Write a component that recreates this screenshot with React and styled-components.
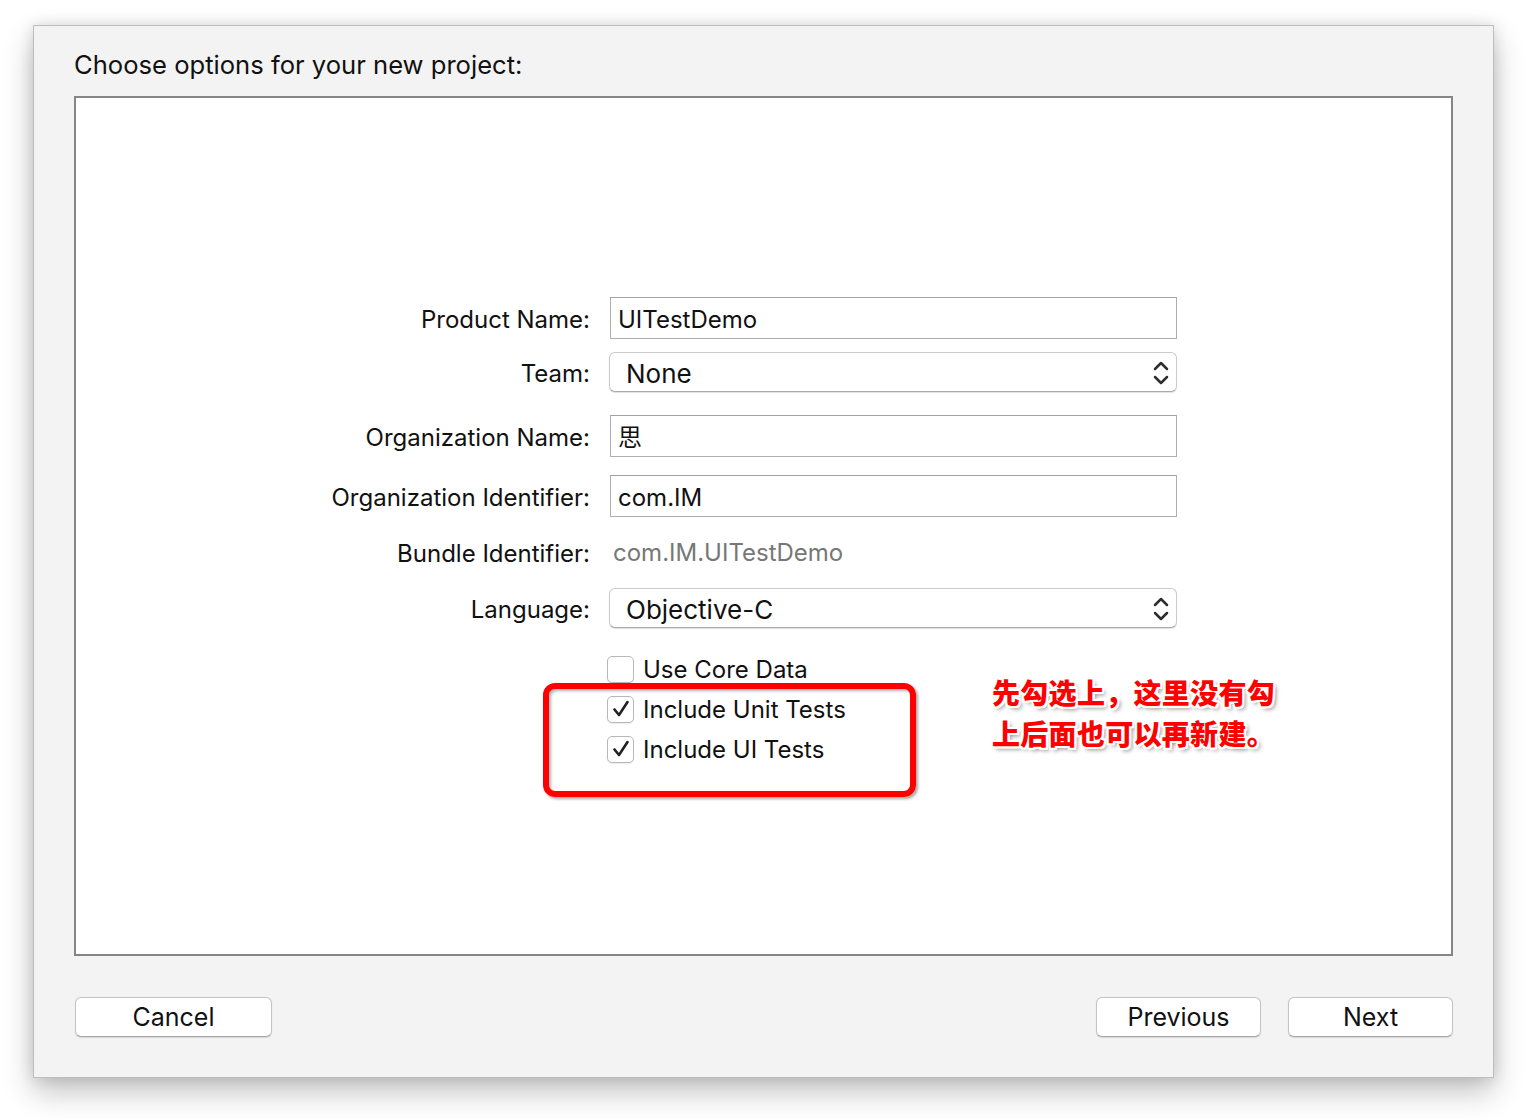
import React from "react";
import styled, { createGlobalStyle } from "styled-components";

const Global = createGlobalStyle`
  html, body { margin: 0; padding: 0; background: #ffffff; }
  body { font-family: Inter, "Liberation Sans", "Noto Sans CJK SC", sans-serif; color: #111; }
  * { box-sizing: border-box; }
`;

const Page = styled.div`
  padding: 25px 0 0 33px;
  width: 1528px;
  height: 1120px;
`;

const Window = styled.div`
  width: 1461px;
  height: 1053px;
  background: #f3f3f3;
  border: 1px solid #bdbdbd;
  box-shadow: 0 14px 28px rgba(0, 0, 0, 0.24), 0 0 14px rgba(0, 0, 0, 0.12);
  padding: 0 40px 40px 40px;
  display: flex;
  flex-direction: column;
`;

const Title = styled.div`
  padding-top: 25px;
  margin-bottom: 17px;
  font-size: 25.6px;
  line-height: 28px;
  color: #111;
`;

const Panel = styled.div`
  position: relative;
  height: 860px;
  background: #fff;
  border: 2px solid #858585;
  padding-top: 199px;
`;

const Form = styled.div`
  display: grid;
  grid-template-columns: 514px 567px;
  column-gap: 20px;
  align-items: center;
`;

const Label = styled.div`
  text-align: right;
  font-size: 24px;
  color: #111;
  height: ${(p) => p.$h}px;
  padding-top: 4px;
  line-height: ${(p) => p.$h - 4}px;
  margin-top: ${(p) => p.$mt || 0}px;
`;

const Field = styled.div`
  height: 42px;
  margin-top: ${(p) => p.$mt || 0}px;
  border: 1px solid #aeaeae;
  border-top-color: #a2a2a2;
  background: #fff;
  padding: 3px 0 0 7px;
  font-size: 24px;
  line-height: 38px;
  color: #111;
`;

const Popup = styled.div`
  height: 40px;
  margin-top: ${(p) => p.$mt || 0}px;
  margin-left: -1px;
  border: 1px solid #cbcbcb;
  border-bottom-color: #aaaaaa;
  border-radius: 6px;
  background: #fff;
  box-shadow: 0 1px 1px rgba(0, 0, 0, 0.12);
  padding: 2px 7px 0 16px;
  display: flex;
  align-items: center;
  justify-content: space-between;
  font-size: 26px;
  color: #111;
`;

const Plain = styled.div`
  height: 40px;
  margin-top: ${(p) => p.$mt || 0}px;
  padding: 2px 0 0 3px;
  line-height: 38px;
  font-size: 24px;
  color: #777;
`;

const Checks = styled.div`
  grid-column: 2;
  margin-top: 28px;
  margin-left: -3px;
  display: flex;
  flex-direction: column;
  gap: 14px;
`;

const CheckRow = styled.div`
  display: flex;
  align-items: center;
  gap: 9px;
  height: 26px;
  font-size: 24px;
  color: #111;
`;

const Box = styled.div`
  width: 27px;
  height: 27px;
  border: 1px solid #b8b8b8;
  border-radius: 5px;
  background: #fff;
  box-shadow: 0 1px 1px rgba(0, 0, 0, 0.08);
  display: flex;
  align-items: center;
  justify-content: center;
`;

const RedFrame = styled.div`
  position: absolute;
  left: 467px;
  top: 585px;
  width: 373px;
  height: 114px;
  border: 6px solid #ff0000;
  border-radius: 12px;
  box-shadow: 2px 2px 3px rgba(0, 0, 0, 0.35), inset 2px 2px 3px rgba(0, 0, 0, 0.3);
  pointer-events: none;
`;

const Note = styled.div`
  position: absolute;
  left: 916px;
  top: 574px;
  font-family: "Noto Sans CJK SC", sans-serif;
  font-weight: 900;
  font-size: 28px;
  line-height: 41px;
  color: #ff0000;
  letter-spacing: 0.3px;
  text-shadow: -2px -2px 0 #fff, 2px -2px 0 #fff, -2px 2px 0 #fff, 2px 2px 0 #fff,
    0 -2px 0 #fff, 0 2px 0 #fff, -2px 0 0 #fff, 2px 0 0 #fff,
    3px 3px 4px rgba(0, 0, 0, 0.45);
`;

const Footer = styled.div`
  margin-top: 41px;
  display: flex;
  align-items: center;
`;

const Button = styled.button`
  height: 40px;
  width: ${(p) => p.$w}px;
  margin-left: ${(p) => p.$ml || 0}px;
  border: 1px solid #c4c4c4;
  border-bottom-color: #a8a8a8;
  border-radius: 6px;
  background: #fff;
  box-shadow: 0 1px 1px rgba(0, 0, 0, 0.12);
  font-family: inherit;
  font-size: 25px;
  color: #111;
  padding: 0;
`;

const Spacer = styled.div`
  flex: 1;
`;

const Chevrons = () => (
  <svg width="16" height="26" viewBox="0 0 16 26" fill="none" stroke="#2e2e2e" strokeWidth="2.5" strokeLinecap="round" strokeLinejoin="round">
    <path d="M2 9 L8 3 L14 9" />
    <path d="M2 17 L8 23 L14 17" />
  </svg>
);

const Check = () => (
  <svg width="20" height="20" viewBox="0 0 20 20" fill="none" stroke="#222" strokeWidth="2.6" strokeLinecap="round" strokeLinejoin="round">
    <path d="M3.5 10.5 L8 16 L16.5 3" />
  </svg>
);

export default function App() {
  return (
    <>
      <Global />
      <Page>
        <Window>
          <Title>Choose options for your new project:</Title>
          <Panel>
            <Form>
              <Label $h={42}>Product Name:</Label>
              <Field>UITestDemo</Field>

              <Label $h={40} $mt={13}>Team:</Label>
              <Popup $mt={13}>
                <span>None</span>
                <Chevrons />
              </Popup>

              <Label $h={42} $mt={23}>Organization Name:</Label>
              <Field $mt={23}>思</Field>

              <Label $h={42} $mt={18}>Organization Identifier:</Label>
              <Field $mt={18}>com.IM</Field>

              <Label $h={40} $mt={15}>Bundle Identifier:</Label>
              <Plain $mt={15}>com.IM.UITestDemo</Plain>

              <Label $h={40} $mt={16}>Language:</Label>
              <Popup $mt={16}>
                <span>Objective-C</span>
                <Chevrons />
              </Popup>

              <Checks>
                <CheckRow>
                  <Box />
                  Use Core Data
                </CheckRow>
                <CheckRow>
                  <Box>
                    <Check />
                  </Box>
                  Include Unit Tests
                </CheckRow>
                <CheckRow>
                  <Box>
                    <Check />
                  </Box>
                  Include UI Tests
                </CheckRow>
              </Checks>
            </Form>
            <RedFrame />
            <Note>
              先勾选上，这里没有勾
              <br />
              上后面也可以再新建。
            </Note>
          </Panel>
          <Footer>
            <Button $w={197} $ml={1}>Cancel</Button>
            <Spacer />
            <Button $w={165}>Previous</Button>
            <Button $w={165} $ml={27}>Next</Button>
          </Footer>
        </Window>
      </Page>
    </>
  );
}
